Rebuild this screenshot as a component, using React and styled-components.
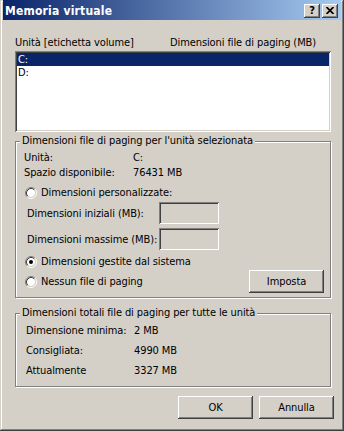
import React from 'react';
import styled, { createGlobalStyle } from 'styled-components';

const FONT = '"DejaVu Sans Condensed", "Liberation Sans", Arial, sans-serif';

const Global = createGlobalStyle`
  html, body { margin: 0; padding: 0; background: #d4d0c8; }
  body {
    font-family: ${FONT};
    font-size: 11px;
    letter-spacing: -0.1px;
    color: #000;
  }
`;

const raised = `
  box-shadow: inset -1px -1px 0 #404040, inset 1px 1px 0 #fff,
    inset -2px -2px 0 #808080, inset 2px 2px 0 #d4d0c8;
`;
const sunken = `
  box-shadow: inset 1px 1px 0 #808080, inset -1px -1px 0 #fff,
    inset 2px 2px 0 #404040, inset -2px -2px 0 #d4d0c8;
`;

const Window = styled.div`
  width: 344px;
  height: 431px;
  box-sizing: border-box;
  padding: 0 3px 3px 3px;
  background: #d4d0c8;
  box-shadow: inset -1px -1px 0 #404040, inset 1px 1px 0 #d4d0c8,
    inset -2px -2px 0 #808080, inset 2px 2px 0 #fff;
  display: flex;
  flex-direction: column;
`;

const TitleBar = styled.div`
  height: 20px;
  box-sizing: border-box;
  padding: 0 3px 0 2px;
  display: flex;
  align-items: flex-start;
  justify-content: space-between;
  background: linear-gradient(to right, #0a246a, #a6caf0);
`;

const Title = styled.span`
  color: #fff;
  font-weight: bold;
  font-size: 12px;
  letter-spacing: 0.2px;
  line-height: 14px;
  margin-top: 4px;
`;

const TitleButtons = styled.div`
  display: flex;
  gap: 2px;
  margin-top: 4px;
`;

const TitleButton = styled.div`
  width: 16px;
  height: 14px;
  background: #d4d0c8;
  ${raised}
  display: flex;
  align-items: center;
  justify-content: center;
  font-weight: bold;
  font-size: 11px;
  line-height: 14px;
  padding-bottom: 1px;
  box-sizing: border-box;
`;

const Body = styled.div`
  padding: 16px 10px 0 12px;
  display: flex;
  flex-direction: column;
`;

const Headers = styled.div`
  display: flex;
  line-height: 13px;
`;

const HeaderCell = styled.span`
  width: ${p => (p.$w ? `${p.$w}px` : 'auto')};
`;

const ListBox = styled.div`
  margin-top: 2px;
  height: 81px;
  box-sizing: border-box;
  padding: 2px;
  background: #fff;
  ${sunken}
`;

const ListRow = styled.div`
  height: 13px;
  line-height: 13px;
  padding-left: 1px;
  background: ${p => (p.$selected ? '#0a246a' : 'transparent')};
  color: ${p => (p.$selected ? '#fff' : '#000')};
`;

const Group = styled.div`
  margin-top: ${p => p.$mt}px;
  border: 1px solid #808080;
  box-shadow: inset 1px 1px 0 #fff, 1px 1px 0 #fff;
  display: flex;
  flex-direction: column;
  padding: 0 6px ${p => p.$pb}px 0;
`;

const Legend = styled.div`
  align-self: flex-start;
  margin: -8px 0 0 4px;
  padding: 0 2px;
  background: #d4d0c8;
  line-height: 13px;
`;

const Row = styled.div`
  display: flex;
  align-items: center;
  margin-top: ${p => p.$mt || 0}px;
  padding-left: ${p => p.$indent || 0}px;
  line-height: ${p => p.$lh || 13}px;
  justify-content: ${p => (p.$spread ? 'space-between' : 'flex-start')};
`;

const Label = styled.span`
  width: ${p => p.$w}px;
  flex-shrink: 0;
  white-space: nowrap;
`;

const EditBox = styled.div`
  width: 60px;
  height: 22px;
  background: #d4d0c8;
  ${sunken}
`;

const RadioLabel = styled.label`
  display: flex;
  align-items: center;
  gap: 4px;
  line-height: 13px;
`;

const Button = styled.button`
  width: 75px;
  height: 23px;
  border: none;
  padding: 0;
  background: #d4d0c8;
  ${raised}
  font-family: ${FONT};
  font-size: 11px;
  letter-spacing: -0.1px;
  color: #000;
`;

const ButtonRow = styled.div`
  margin: 9px -3px 0 0;
  display: flex;
  justify-content: flex-end;
  gap: 6px;
`;

function Radio({ checked }) {
  return (
    <svg width="12" height="12" viewBox="0 0 12 12">
      <circle cx="6" cy="6" r="4" fill="#fff" />
      <path d="M2.11 9.89 A5.5 5.5 0 0 1 9.89 2.11" fill="none" stroke="#808080" />
      <path d="M9.89 2.11 A5.5 5.5 0 0 1 2.11 9.89" fill="none" stroke="#fff" />
      <path d="M2.82 9.18 A4.5 4.5 0 0 1 9.18 2.82" fill="none" stroke="#404040" />
      <path d="M9.18 2.82 A4.5 4.5 0 0 1 2.82 9.18" fill="none" stroke="#d4d0c8" />
      {checked && <circle cx="6" cy="6" r="2" fill="#000" />}
    </svg>
  );
}

function CloseGlyph() {
  return (
    <svg width="8" height="7" viewBox="0 0 8 7">
      <path d="M0.5 0 L7.5 7 M7.5 0 L0.5 7" stroke="#000" strokeWidth="1.7" />
    </svg>
  );
}

export default function App() {
  return (
    <>
      <Global />
      <Window>
        <TitleBar>
          <Title>Memoria virtuale</Title>
          <TitleButtons>
            <TitleButton>?</TitleButton>
            <TitleButton><CloseGlyph /></TitleButton>
          </TitleButtons>
        </TitleBar>
        <Body>
          <Headers>
            <HeaderCell $w={155}>Unità [etichetta volume]</HeaderCell>
            <HeaderCell>Dimensioni file di paging (MB)</HeaderCell>
          </Headers>
          <ListBox>
            <ListRow $selected>C:</ListRow>
            <ListRow>D:</ListRow>
          </ListBox>

          <Group $mt={9} $pb={4}>
            <Legend>Dimensioni file di paging per l'unità selezionata</Legend>
            <Row $mt={4} $indent={8}>
              <Label $w={109}>Unità:</Label>
              <span>C:</span>
            </Row>
            <Row $mt={2} $indent={8}>
              <Label $w={109}>Spazio disponibile:</Label>
              <span>76431 MB</span>
            </Row>
            <Row $mt={7} $indent={9}>
              <RadioLabel><Radio />Dimensioni personalizzate:</RadioLabel>
            </Row>
            <Row $mt={3} $indent={11}>
              <Label $w={132}>Dimensioni iniziali (MB):</Label>
              <EditBox />
            </Row>
            <Row $mt={4} $indent={11}>
              <Label $w={132}>Dimensioni massime (MB):</Label>
              <EditBox />
            </Row>
            <Row $mt={5} $indent={9}>
              <RadioLabel><Radio checked />Dimensioni gestite dal sistema</RadioLabel>
            </Row>
            <Row $mt={2} $indent={9} $spread>
              <RadioLabel><Radio />Nessun file di paging</RadioLabel>
              <Button>Imposta</Button>
            </Row>
          </Group>

          <Group $mt={15} $pb={5}>
            <Legend>Dimensioni totali file di paging per tutte le unità</Legend>
            <Row $mt={2} $indent={10} $lh={20}>
              <Label $w={108}>Dimensione minima:</Label>
              <span>2 MB</span>
            </Row>
            <Row $indent={10} $lh={20}>
              <Label $w={108}>Consigliata:</Label>
              <span>4990 MB</span>
            </Row>
            <Row $indent={10} $lh={20}>
              <Label $w={108}>Attualmente</Label>
              <span>3327 MB</span>
            </Row>
          </Group>

          <ButtonRow>
            <Button>OK</Button>
            <Button>Annulla</Button>
          </ButtonRow>
        </Body>
      </Window>
    </>
  );
}
